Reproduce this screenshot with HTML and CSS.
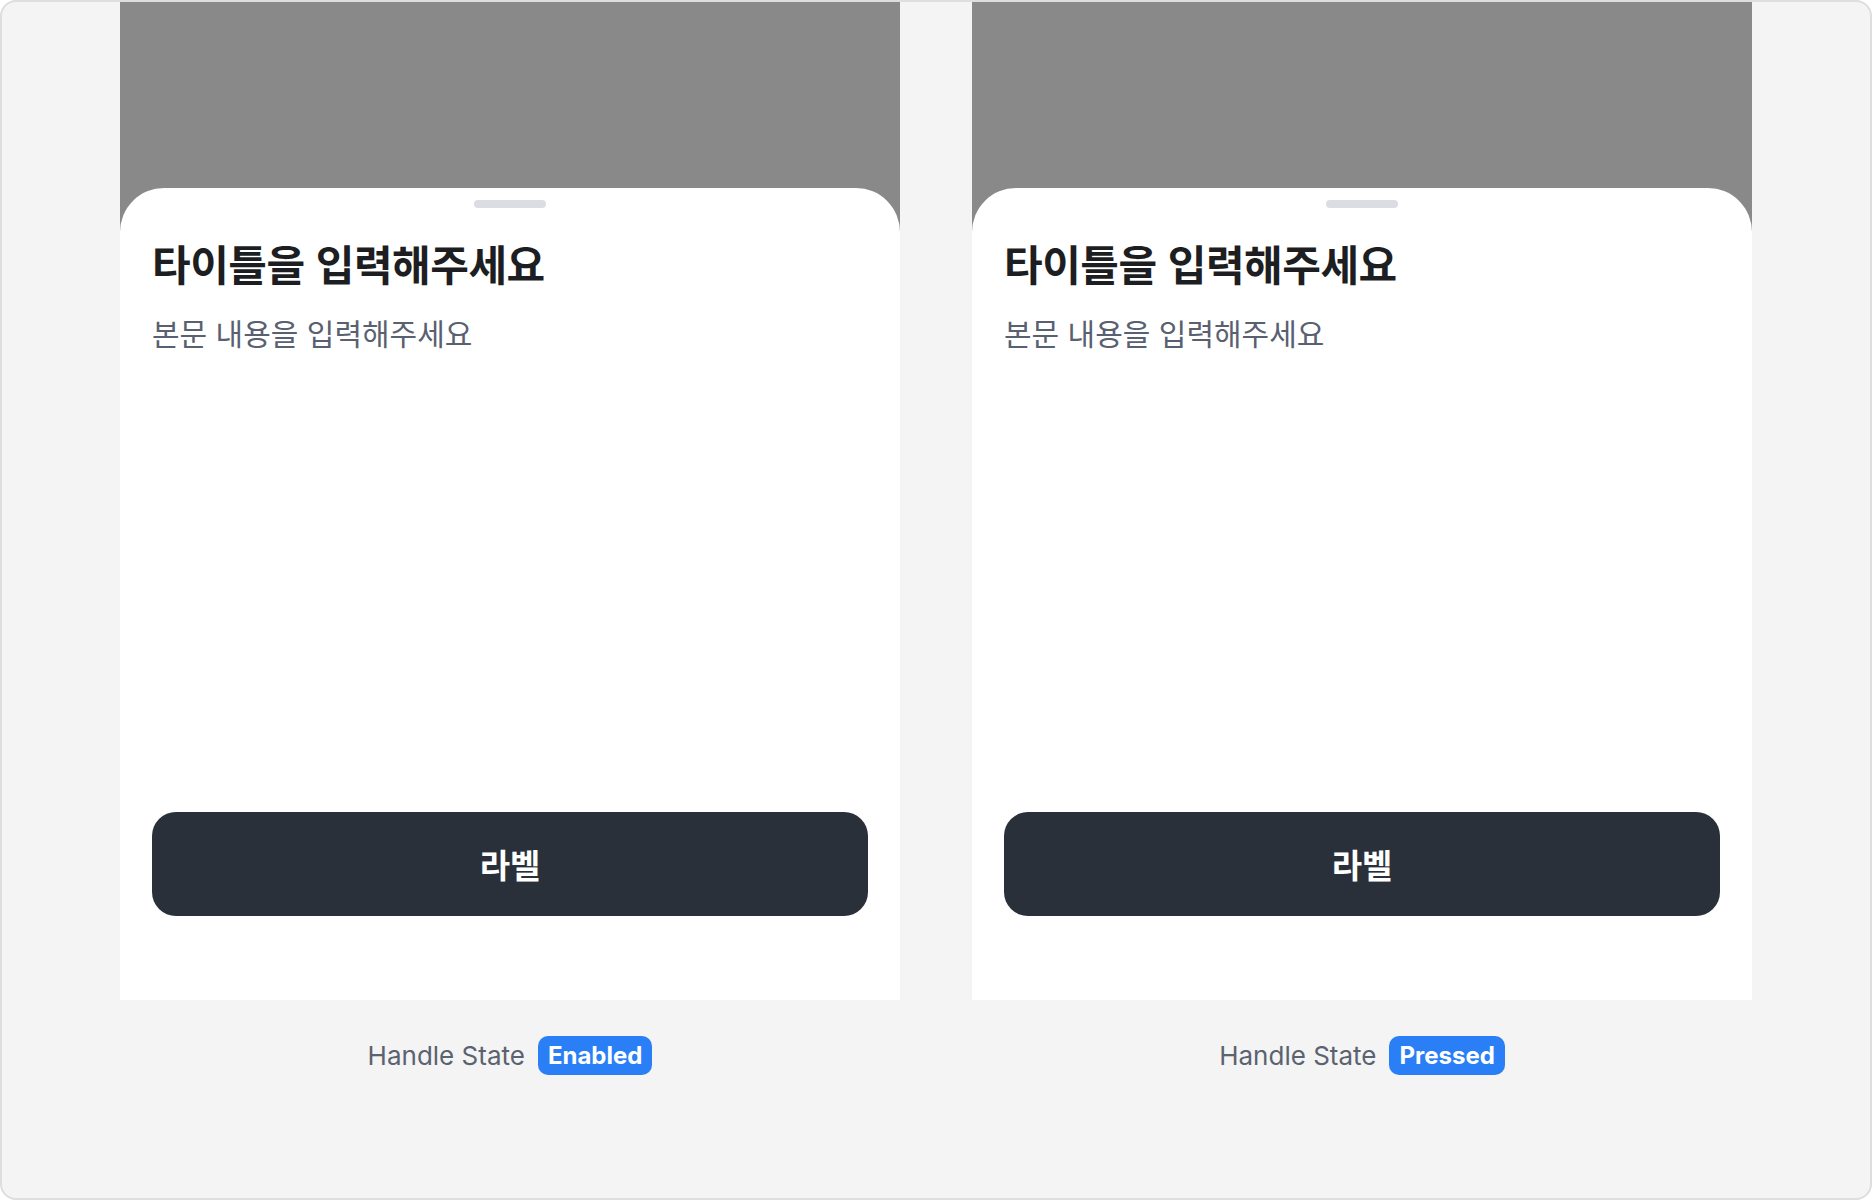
FILE: index.html
```html
<!DOCTYPE html>
<html lang="ko">
<head>
    <meta charset="UTF-8">
    <meta name="viewport" content="width=device-width, initial-scale=1.0">
    <title>Bottom Sheet Handle States</title>
    <link rel="stylesheet" href="styles.css">
</head>
<body>
    <div class="frame">
        <div class="column">
            <div class="stage">
                <div class="sheet">
                    <div class="handle"></div>
                    <h2 class="sheet-title">타이틀을 입력해주세요</h2>
                    <p class="sheet-body">본문 내용을 입력해주세요</p>
                    <button class="sheet-btn">라벨</button>
                </div>
            </div>
            <div class="caption">
                <span class="caption-text">Handle State</span>
                <span class="badge">Enabled</span>
            </div>
        </div>

        <div class="column">
            <div class="stage">
                <div class="sheet">
                    <div class="handle"></div>
                    <h2 class="sheet-title">타이틀을 입력해주세요</h2>
                    <p class="sheet-body">본문 내용을 입력해주세요</p>
                    <button class="sheet-btn">라벨</button>
                </div>
            </div>
            <div class="caption">
                <span class="caption-text">Handle State</span>
                <span class="badge">Pressed</span>
            </div>
        </div>
    </div>
</body>
</html>
```

FILE: styles.css
```css
body {
    margin: 0;
    font-family: Inter, "Noto Sans CJK KR", sans-serif;
}

.frame {
    width: 1872px;
    height: 1200px;
    box-sizing: border-box;
    border: 2px solid #dedede;
    border-radius: 16px;
    background-color: #f4f4f4;
    padding: 0 118px;
    display: flex;
    gap: 72px;
    overflow: hidden;
}

.column {
    flex: 1;
    margin-top: -2px; /* dim layer sits over the frame border */
}

.stage {
    height: 1000px;
    box-sizing: border-box;
    padding-top: 188px;
    background-color: rgba(0, 0, 0, 0.44);
    display: flex;
    flex-direction: column;
}

.sheet {
    flex: 1;
    background-color: #ffffff;
    border-radius: 44px 44px 0 0;
    padding: 12px 32px 84px;
    display: flex;
    flex-direction: column;
}

.handle {
    width: 72px;
    height: 8px;
    border-radius: 4px;
    background-color: #dcdde2;
    align-self: center;
}

.sheet-title {
    margin: 27px 0 0;
    font-family: "Noto Sans CJK KR", sans-serif;
    font-size: 42px;
    font-weight: 700;
    line-height: 56px;
    letter-spacing: -0.5px;
    color: #1d1e22;
}

.sheet-body {
    margin: 21px 0 0;
    font-family: "Noto Sans CJK KR", sans-serif;
    font-size: 30px;
    font-weight: 400;
    line-height: 40px;
    color: #596070;
}

.sheet-btn {
    margin-top: auto;
    height: 104px;
    border: none;
    border-radius: 24px;
    background-color: #29303a;
    color: #ffffff;
    font-family: "Noto Sans CJK KR", sans-serif;
    font-size: 33px;
    font-weight: 700;
    cursor: pointer;
}

.caption {
    margin-top: 36px;
    display: flex;
    justify-content: center;
    align-items: center;
    gap: 13px;
}

.caption-text {
    font-size: 26px;
    color: #5b6270;
}

.badge {
    height: 39px;
    box-sizing: border-box;
    padding: 0 10px;
    border-radius: 10px;
    background-color: #2b7ff6;
    color: #ffffff;
    font-size: 24px;
    font-weight: 700;
    display: flex;
    align-items: center;
}
```
